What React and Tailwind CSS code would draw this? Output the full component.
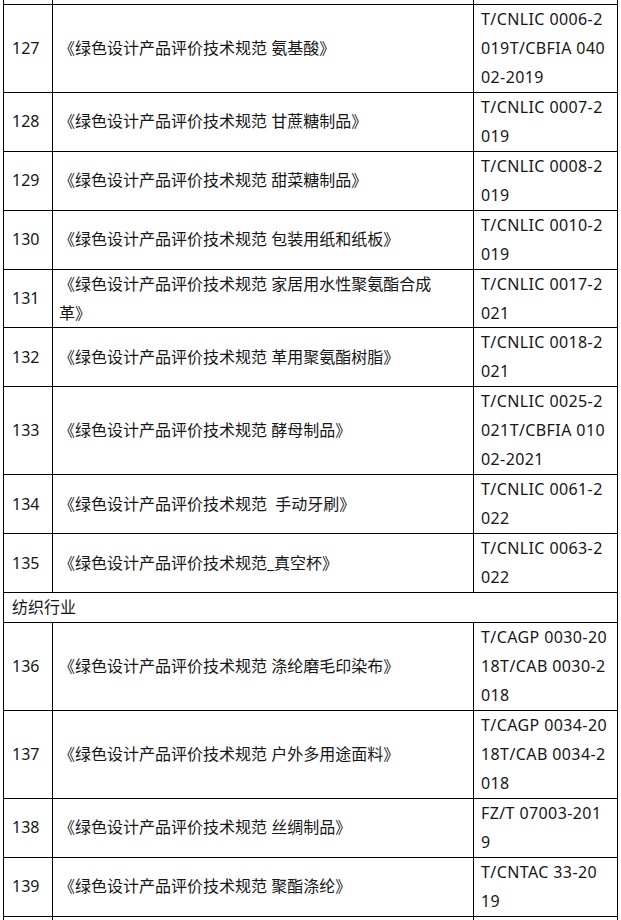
const rows = [
  { no: '127', title: ['《绿色设计产品评价技术规范 氨基酸》'], code: ['T/CNLIC 0006-2', '019T/CBFIA 040', '02-2019'] },
  { no: '128', title: ['《绿色设计产品评价技术规范 甘蔗糖制品》'], code: ['T/CNLIC 0007-2', '019'] },
  { no: '129', title: ['《绿色设计产品评价技术规范 甜菜糖制品》'], code: ['T/CNLIC 0008-2', '019'] },
  { no: '130', title: ['《绿色设计产品评价技术规范 包装用纸和纸板》'], code: ['T/CNLIC 0010-2', '019'] },
  { no: '131', title: ['《绿色设计产品评价技术规范 家居用水性聚氨酯合成', '革》'], code: ['T/CNLIC 0017-2', '021'] },
  { no: '132', title: ['《绿色设计产品评价技术规范 革用聚氨酯树脂》'], code: ['T/CNLIC 0018-2', '021'] },
  { no: '133', title: ['《绿色设计产品评价技术规范 酵母制品》'], code: ['T/CNLIC 0025-2', '021T/CBFIA 010', '02-2021'] },
  { no: '134', title: ['《绿色设计产品评价技术规范\u00a0\u00a0手动牙刷》'], code: ['T/CNLIC 0061-2', '022'] },
  { no: '135', title: ['《绿色设计产品评价技术规范_真空杯》'], code: ['T/CNLIC 0063-2', '022'] },
  { section: '纺织行业' },
  { no: '136', title: ['《绿色设计产品评价技术规范 涤纶磨毛印染布》'], code: ['T/CAGP 0030-20', '18T/CAB 0030-2', '018'] },
  { no: '137', title: ['《绿色设计产品评价技术规范 户外多用途面料》'], code: ['T/CAGP 0034-20', '18T/CAB 0034-2', '018'] },
  { no: '138', title: ['《绿色设计产品评价技术规范 丝绸制品》'], code: ['FZ/T 07003-201', '9'] },
  { no: '139', title: ['《绿色设计产品评价技术规范 聚酯涤纶》'], code: ['T/CNTAC 33-20', '19'] },
];

const Lines = ({ lines }) =>
  lines.map((l, i) => (
    <span key={i}>
      {i > 0 && <br />}
      {l}
    </span>
  ));

export default function App() {
  const cell = 'border border-black align-middle';
  return (
    <div
      className="bg-white w-[621px] h-[920px] overflow-hidden pl-[3px] text-[16px] leading-[28.96px] text-[#161616]"
      style={{ fontFamily: '"Noto Sans", "Noto Sans CJK SC", sans-serif' }}
    >
      <table className="border-collapse table-fixed w-[614px] -mt-[26px]">
        <colgroup>
          <col className="w-[49px]" />
          <col className="w-[421px]" />
          <col className="w-[144px]" />
        </colgroup>
        <tbody>
          <tr>
            <td className={cell + ' h-[30px]'}></td>
            <td className={cell}></td>
            <td className={cell}></td>
          </tr>
          {rows.map((r, i) =>
            r.section ? (
              <tr key={i}>
                <td colSpan={3} className={cell + ' pl-[8px]'}>
                  {r.section}
                </td>
              </tr>
            ) : (
              <tr key={i}>
                <td className={cell + ' pl-[8px]'}>{r.no}</td>
                <td className={cell + ' pl-[6px] whitespace-nowrap'}>
                  <Lines lines={r.title} />
                </td>
                <td className={cell + ' pl-[7px] whitespace-nowrap tracking-[0.4px]'}>
                  <Lines lines={r.code} />
                </td>
              </tr>
            )
          )}
          <tr>
            <td className={cell + ' h-[59px]'}></td>
            <td className={cell}></td>
            <td className={cell}></td>
          </tr>
        </tbody>
      </table>
    </div>
  );
}
